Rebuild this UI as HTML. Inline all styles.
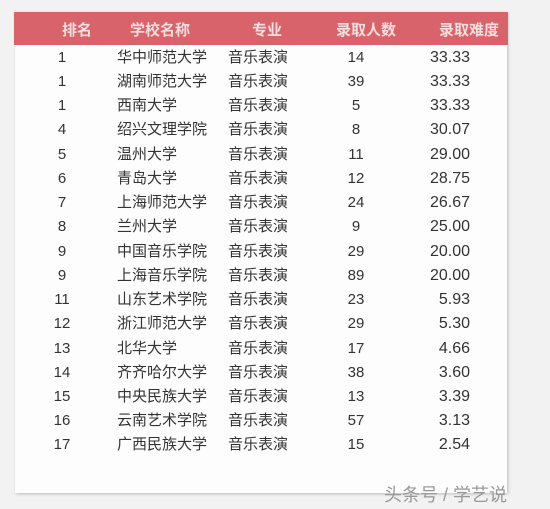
<!DOCTYPE html><html><head><meta charset="utf-8"><style>
body{margin:0;width:550px;height:509px;background:#f2f2f2;font-family:"Liberation Sans","Noto Sans CJK SC",sans-serif;position:relative;overflow:hidden}
.card{position:absolute;left:15px;top:12px;width:492px;height:481px;background:#fdfdfd;box-shadow:1px 1px 3px #bbb}
.hd{position:absolute;left:14px;top:12px;width:494px;height:33px;background:#d9636b}
.hd span{position:absolute;top:7px;color:#f6dede;font-size:15px;font-weight:bold}
.r{position:absolute;left:0;width:550px;height:24px;font-size:15px;color:#333}
.r span{position:absolute;top:3px;line-height:18px}
.c1{left:46px;width:32px;text-align:center}
.c2{left:117px}
.c3{left:228px}
.c4{left:336px;width:40px;text-align:center}
.c5{left:420px;width:50px;text-align:right;font-size:16px}
.wm{position:absolute;left:384px;top:481px;font-size:18px;color:#999;letter-spacing:0}
</style></head><body>
<div class="card"></div>
<div class="hd"><span style="left:48px">排名</span><span style="left:116px">学校名称</span><span style="left:238px">专业</span><span style="left:322px">录取人数</span><span style="left:425px">录取难度</span></div>
<div class="r" style="top:46px"><span class="c1">1</span><span class="c2">华中师范大学</span><span class="c3">音乐表演</span><span class="c4">14</span><span class="c5">33.33</span></div>
<div class="r" style="top:70px"><span class="c1">1</span><span class="c2">湖南师范大学</span><span class="c3">音乐表演</span><span class="c4">39</span><span class="c5">33.33</span></div>
<div class="r" style="top:94px"><span class="c1">1</span><span class="c2">西南大学</span><span class="c3">音乐表演</span><span class="c4">5</span><span class="c5">33.33</span></div>
<div class="r" style="top:118px"><span class="c1">4</span><span class="c2">绍兴文理学院</span><span class="c3">音乐表演</span><span class="c4">8</span><span class="c5">30.07</span></div>
<div class="r" style="top:143px"><span class="c1">5</span><span class="c2">温州大学</span><span class="c3">音乐表演</span><span class="c4">11</span><span class="c5">29.00</span></div>
<div class="r" style="top:167px"><span class="c1">6</span><span class="c2">青岛大学</span><span class="c3">音乐表演</span><span class="c4">12</span><span class="c5">28.75</span></div>
<div class="r" style="top:191px"><span class="c1">7</span><span class="c2">上海师范大学</span><span class="c3">音乐表演</span><span class="c4">24</span><span class="c5">26.67</span></div>
<div class="r" style="top:215px"><span class="c1">8</span><span class="c2">兰州大学</span><span class="c3">音乐表演</span><span class="c4">9</span><span class="c5">25.00</span></div>
<div class="r" style="top:240px"><span class="c1">9</span><span class="c2">中国音乐学院</span><span class="c3">音乐表演</span><span class="c4">29</span><span class="c5">20.00</span></div>
<div class="r" style="top:264px"><span class="c1">9</span><span class="c2">上海音乐学院</span><span class="c3">音乐表演</span><span class="c4">89</span><span class="c5">20.00</span></div>
<div class="r" style="top:288px"><span class="c1">11</span><span class="c2">山东艺术学院</span><span class="c3">音乐表演</span><span class="c4">23</span><span class="c5">5.93</span></div>
<div class="r" style="top:312px"><span class="c1">12</span><span class="c2">浙江师范大学</span><span class="c3">音乐表演</span><span class="c4">29</span><span class="c5">5.30</span></div>
<div class="r" style="top:337px"><span class="c1">13</span><span class="c2">北华大学</span><span class="c3">音乐表演</span><span class="c4">17</span><span class="c5">4.66</span></div>
<div class="r" style="top:361px"><span class="c1">14</span><span class="c2">齐齐哈尔大学</span><span class="c3">音乐表演</span><span class="c4">38</span><span class="c5">3.60</span></div>
<div class="r" style="top:385px"><span class="c1">15</span><span class="c2">中央民族大学</span><span class="c3">音乐表演</span><span class="c4">13</span><span class="c5">3.39</span></div>
<div class="r" style="top:409px"><span class="c1">16</span><span class="c2">云南艺术学院</span><span class="c3">音乐表演</span><span class="c4">57</span><span class="c5">3.13</span></div>
<div class="r" style="top:433px"><span class="c1">17</span><span class="c2">广西民族大学</span><span class="c3">音乐表演</span><span class="c4">15</span><span class="c5">2.54</span></div>
<div class="wm">头条号 / 学艺说</div>
</body></html>
